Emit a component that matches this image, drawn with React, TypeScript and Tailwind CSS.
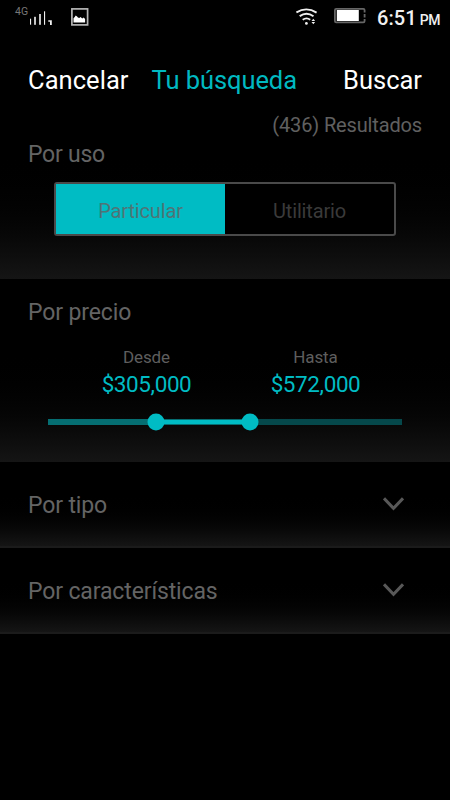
// Search filter screen: use type, price range and collapsible filter groups
import React, { useState } from 'react';

const PRICE_RANGE = { start: 30.5, end: 57.2 };

function StatusBar() {
  return (
    <div className="flex h-9 items-start">
      <span className="ml-[15px] mt-[5px] w-[15px] text-[10.5px] leading-[13px] text-[#777]">4G</span>
      <svg className="mt-2.5" width="24" height="16" viewBox="0 0 24 16" fill="#f0f0f0">
        <rect x="0" y="8.7" width="1.1" height="6" />
        <rect x="4" y="6.8" width="2" height="8" fill="#c4c4c4" />
        <rect x="9" y="4" width="2" height="10.8" fill="#c4c4c4" />
        <rect x="14" y="1.3" width="1.1" height="13.5" />
        <path d="M18.3 10.3h3.5v4.8h-1.8v-3.3h-1.7z" />
      </svg>
      <svg className="ml-[17px] mt-2" width="18" height="18" viewBox="0 0 18 18">
        <rect x="0.9" y="0.9" width="15.7" height="16" fill="none" stroke="#b4b4b4" strokeWidth="1.7" />
        <path d="M2.5 14.6v-4.3l1.2-1.3 1-1.5 1.4.9.8 1.2 1.4.3 1.2-.9 1.8 1.5 1.3-.9 1.5 1.5v3.5z" fill="#fff" />
      </svg>
      <svg className="ml-[207px] mt-2" width="22" height="18" viewBox="0 0 22 18" fill="none" stroke="#f0f0f0" strokeWidth="1.9">
        <path d="M.4 4.4Q10.4-1.8 20.6 4.6" />
        <path d="M3.7 8.1Q10.5 3.4 17.5 8.2" />
        <path d="M6.7 11.8Q10.5 9 14.2 11.7" />
        <circle cx="10.4" cy="15.4" r="1.4" fill="#f0f0f0" stroke="none" />
        <path d="M15.5 12.9l1.8-2.2 1.8 2.2zM15.5 14.1l1.8 2.2 1.8-2.2z" fill="#f0f0f0" stroke="none" />
      </svg>
      <svg className="ml-4 mt-2" width="33" height="16" viewBox="0 0 33 16">
        <rect x="0.9" y="0.9" width="29.7" height="13.4" rx="1.3" fill="none" stroke="#666" strokeWidth="1.8" />
        <rect x="29" y="4.5" width="3" height="1.5" fill="#000" />
        <rect x="29" y="9.5" width="3" height="1.5" fill="#000" />
        <rect x="2.8" y="2" width="22" height="11" fill="#fff" />
      </svg>
      <span className="ml-2.5 mt-[5px] whitespace-nowrap text-[20px] font-medium leading-[26px] tracking-[0.1px] text-[#f0f0f0]">
        6:51<span className="ml-[3px] text-[14px] tracking-[-0.4px]">PM</span>
      </span>
    </div>
  );
}

interface PriceLabelProps {
  label: string;
  value: string;
}

function PriceLabel({ label, value }: PriceLabelProps) {
  return (
    <div className="w-[169px] text-center">
      <p className="text-[17px] leading-5 tracking-[-0.1px] text-[#5e5e5e]">{label}</p>
      <p className="mt-[3px] text-[22.5px] leading-7 tracking-[-0.4px] text-[#00bcc4]">{value}</p>
    </div>
  );
}

function PriceSlider() {
  return (
    <div className="relative ml-12 mt-[21px] h-[6px] w-[354px] bg-[#05484b]">
      <div className="h-full bg-[#056e72]" style={{ width: `${PRICE_RANGE.start}%` }} />
      <div
        className="absolute top-0 h-full border-y border-[#056e72] bg-[#00bcc4]"
        style={{ left: `${PRICE_RANGE.start}%`, width: `${PRICE_RANGE.end - PRICE_RANGE.start}%` }}
      />
      {[PRICE_RANGE.start, PRICE_RANGE.end].map((pos) => (
        <span
          key={pos}
          className="absolute top-1/2 h-[17px] w-[17px] -translate-x-1/2 -translate-y-1/2 rounded-full bg-[#00bcc4]"
          style={{ left: `${pos}%` }}
        />
      ))}
    </div>
  );
}

function FilterRow({ title }: { title: string }) {
  return (
    <button className="flex h-[86px] w-full items-start justify-between border-b-2 border-[#1b1b1b] bg-linear-to-b from-black from-35% to-[#151515] pl-7 pr-[46px] text-left">
      <span className="mt-[30px] text-[23px] leading-7 tracking-[-0.13px] text-[#646464]">{title}</span>
      <svg className="mt-[34px]" width="21" height="16" viewBox="0 0 21 16" fill="none" stroke="#585858" strokeWidth="3">
        <path d="M1 2.4l9.5 10 9.5-10" />
      </svg>
    </button>
  );
}

export default function App() {
  const [use, setUse] = useState('Particular');

  return (
    <div className="h-[800px] w-[450px] overflow-hidden bg-black font-['Roboto',sans-serif]">
      <StatusBar />
      <section className="h-[243px] bg-linear-to-b from-black from-45% to-[#151515] pt-7">
        <header className="flex h-8 items-center pl-7 pr-7 text-[25.5px] leading-8">
          <button className="tracking-[0.05px] text-white">Cancelar</button>
          <h1 className="ml-[23px] tracking-[-0.08px] text-[#00b9c1]">Tu búsqueda</h1>
          <button className="ml-auto text-white">Buscar</button>
        </header>
        <p className="mr-7 mt-[17px] text-right text-[20px] leading-6 tracking-[-0.15px] text-[#606060]">(436) Resultados</p>
        <h2 className="ml-7 mt-1 text-[23px] leading-7 tracking-[-0.25px] text-[#646464]">Por uso</h2>
        <div className="ml-[54px] mt-[13px] flex h-[54px] w-[342px] rounded-[3px] border-2 border-[#4a4a4a] bg-black">
          {['Particular', 'Utilitario'].map((option) => (
            <button
              key={option}
              onClick={() => setUse(option)}
              className={`flex-1 pt-[3px] text-[20px] leading-6 tracking-[-0.15px] ${use === option ? 'bg-[#00bcc4] text-[#4f7476]' : 'text-[#3a3a3a]'}`}
            >
              {option}
            </button>
          ))}
        </div>
      </section>
      <section className="h-[183px] bg-linear-to-b from-black from-35% to-[#151515] pt-5">
        <h2 className="ml-7 text-[23px] leading-7 tracking-[-0.13px] text-[#646464]">Por precio</h2>
        <div className="mt-[20px] flex pl-[62px]">
          <PriceLabel label="Desde" value="$305,000" />
          <PriceLabel label="Hasta" value="$572,000" />
        </div>
        <PriceSlider />
      </section>
      <FilterRow title="Por tipo" />
      <FilterRow title="Por características" />
    </div>
  );
}
